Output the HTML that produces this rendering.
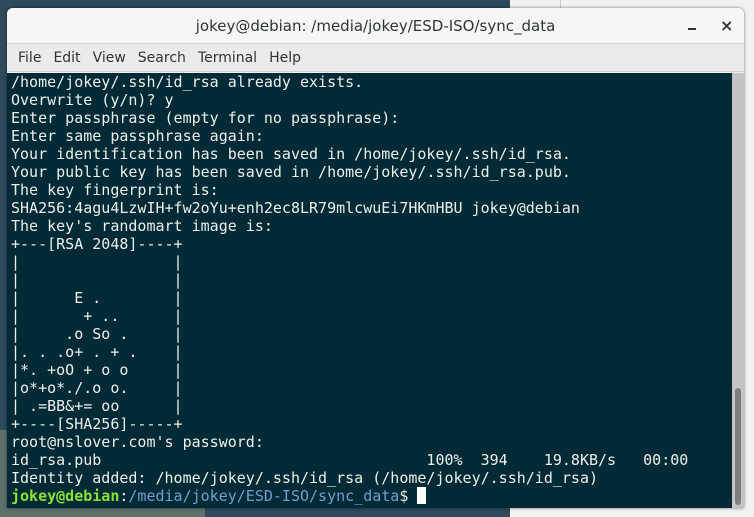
<!DOCTYPE html>
<html><head><meta charset="utf-8"><style>
*{margin:0;padding:0;box-sizing:border-box}
body{width:754px;height:517px;overflow:hidden;position:relative;background:#2e4a5c;font-family:"DejaVu Sans","Liberation Sans",sans-serif}
.bgr{position:absolute;left:510px;top:0;width:244px;height:517px;background:#f2f2f2}
.bgr2{position:absolute;left:560px;top:0;width:1px;height:40px;background:#ccc}
.bgl{position:absolute;left:0;top:430px;width:205px;height:87px;background:#5d716c}
.win{position:absolute;left:7px;top:8px;width:737px;height:500px;background:#f0f0ef;border-radius:6px 6px 0 0;box-shadow:0 0 3px rgba(0,0,0,.5);overflow:hidden}
.title{height:36px;background:#f6f6f5;border-bottom:1px solid #d8d8d6;text-align:center;font-size:15px;line-height:36px;color:#2e3436}
.ctl{position:absolute;top:0;line-height:36px;font-size:16px;color:#2e3436;font-weight:bold}
.min{position:absolute;left:681px;top:20px;width:8px;height:2px;background:#2e3436}
.menu{height:28px;background:#ecebea;font-size:14px;color:#2e3436;line-height:28px;padding-left:5px;border-bottom:1px solid #d0d0ce}
.menu span{margin:0 6px}
.term{position:absolute;left:0;top:65px;width:725px;height:435px;background:#002b36;color:#eeeeec;font-family:"DejaVu Sans Mono","Liberation Mono",monospace;font-size:15px;line-height:18px;white-space:pre;padding-left:4px;overflow:hidden}
.sb{position:absolute;left:725px;top:65px;width:12px;height:435px;background:#c4c4c4}
.th{position:absolute;left:3px;top:315px;width:6px;height:117px;background:#7f7f7f;border-radius:3px}
.g{color:#8ae234;font-weight:bold}.b{color:#729fcf}
.cur{display:inline-block;width:9px;height:17px;background:#fff;vertical-align:-3px}
</style></head><body>
<div class="bgr"></div><div class="bgr2"></div><div class="bgl"></div>
<div class="win">
<div class="title">jokey@debian: /media/jokey/ESD-ISO/sync_data</div>
<div class="min"></div>
<div class="ctl" style="left:713px">×</div>
<div class="menu"><span>File</span><span>Edit</span><span>View</span><span>Search</span><span>Terminal</span><span>Help</span></div>
<div class="term">/home/jokey/.ssh/id_rsa already exists.
Overwrite (y/n)? y
Enter passphrase (empty for no passphrase):
Enter same passphrase again:
Your identification has been saved in /home/jokey/.ssh/id_rsa.
Your public key has been saved in /home/jokey/.ssh/id_rsa.pub.
The key fingerprint is:
SHA256:4agu4LzwIH+fw2oYu+enh2ec8LR79mlcwuEi7HKmHBU jokey@debian
The key's randomart image is:
+---[RSA 2048]----+
|                 |
|                 |
|      E .        |
|       + ..      |
|     .o So .     |
|. . .o+ . + .    |
|*. +oO + o o     |
|o*+o*./.o o.     |
| .=BB&+= oo      |
+----[SHA256]-----+
root@nslover.com's password:
id_rsa.pub                                    100%  394    19.8KB/s   00:00
Identity added: /home/jokey/.ssh/id_rsa (/home/jokey/.ssh/id_rsa)
<span class="g">jokey@debian</span>:<span class="b">/media/jokey/ESD-ISO/sync_data</span>$ <span class="cur"></span></div>
<div class="sb"><div class="th"></div></div>
</div>
</body></html>
